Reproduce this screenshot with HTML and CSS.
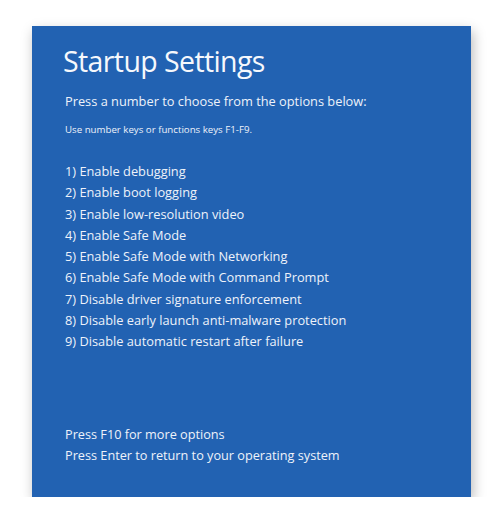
FILE: index.html
```html
<!DOCTYPE html>
<html>
<head>
<meta charset="utf-8">
<link rel="stylesheet" href="styles.css">
</head>
<body>
<div class="panel">
  <h1 class="title">Startup Settings</h1>
  <p class="lead">Press a number to choose from the options below:</p>
  <p class="hint">Use number keys or functions keys F1-F9.</p>
  <ul class="options">
    <li>1) Enable debugging</li>
    <li>2) Enable boot logging</li>
    <li>3) Enable low-resolution video</li>
    <li>4) Enable Safe Mode</li>
    <li>5) Enable Safe Mode with Networking</li>
    <li>6) Enable Safe Mode with Command Prompt</li>
    <li>7) Disable driver signature enforcement</li>
    <li>8) Disable early launch anti-malware protection</li>
    <li>9) Disable automatic restart after failure</li>
  </ul>
  <div class="footer">
    <p>Press F10 for more options</p>
    <p>Press Enter to return to your operating system</p>
  </div>
</div>
</body>
</html>
```
FILE: styles.css
```css
html, body {
  margin: 0;
  padding: 0;
  background: #ffffff;
}
body {
  padding: 26px 0 0 32px;
  font-family: "Open Sans", "Noto Sans", sans-serif;
}
.panel {
  width: 439px;
  height: 471px;
  box-sizing: border-box;
  background: #2262b2;
  color: #eef2fa;
  padding: 15px 0 0 31px;
  display: flex;
  flex-direction: column;
  box-shadow: 2px 5px 12px rgba(0,0,0,0.28);
}
.title {
  margin: 0;
  font-weight: 400;
  font-size: 28.5px;
  letter-spacing: -0.6px;
  line-height: 40px;
  color: #f6f8fc;
}
.lead {
  margin: 10px 0 0 2px;
  font-size: 12.8px;
  line-height: 20px;
}
.hint {
  margin: 12px 0 0 2px;
  font-size: 9.7px;
  line-height: 14px;
}
.options {
  list-style: none;
  margin: 24px 0 0 2px;
  padding: 0;
  font-size: 12.8px;
  line-height: 21.3px;
}
.footer {
  margin: auto 0 31px 2px;
  font-size: 12.7px;
  line-height: 21px;
}
.footer p {
  margin: 0;
}
```
